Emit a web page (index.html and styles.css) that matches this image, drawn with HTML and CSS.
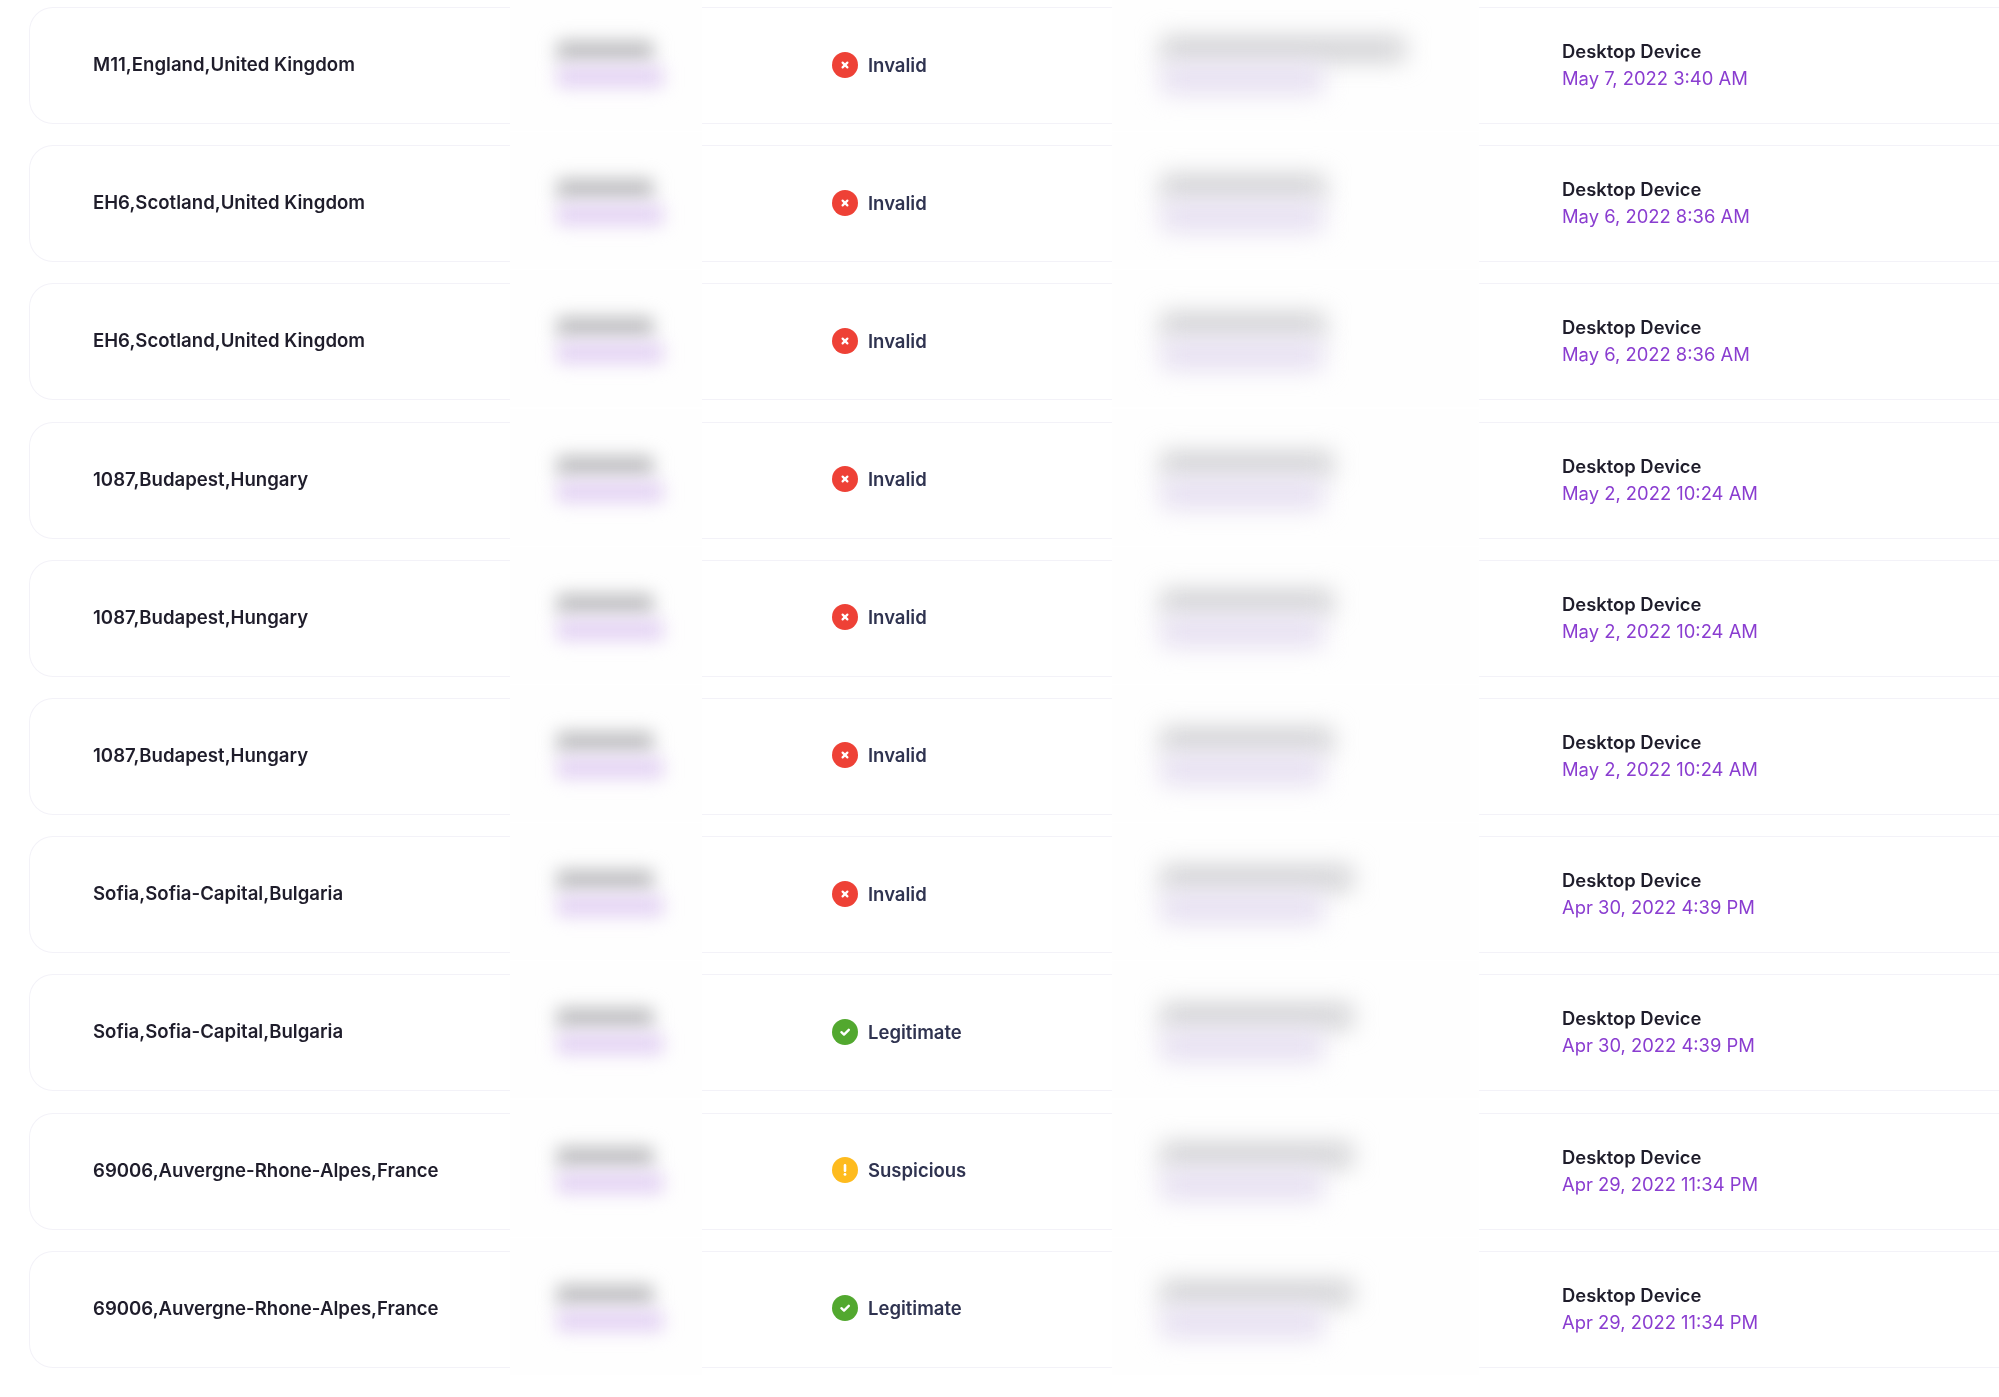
FILE: index.html
```html
<!DOCTYPE html>
<html lang="en">
<head>
<meta charset="utf-8">
<title>Login activity</title>
<link rel="stylesheet" href="styles.css">
</head>
<body>
<svg class="sprite" width="0" height="0" aria-hidden="true">
  <symbol id="i-x" viewBox="0 0 26 26"><path d="M10.6 10.6l4.8 4.8M15.4 10.6l-4.8 4.8" stroke="#fff" stroke-width="2.2" stroke-linecap="round" fill="none"/></symbol>
  <symbol id="i-c" viewBox="0 0 26 26"><path d="M9.4 13.2l2.6 2.4 4.8-4.8" stroke="#fff" stroke-width="2.4" stroke-linecap="round" stroke-linejoin="round" fill="none"/></symbol>
  <symbol id="i-e" viewBox="0 0 26 26"><path d="M13 8.4v5.4" stroke="#fff" stroke-width="2.6" stroke-linecap="round" fill="none"/><circle cx="13" cy="17.4" r="1.4" fill="#fff"/></symbol>
</svg>
<main class="list">
  <div class="row"><div class="loc">M11,England,United Kingdom</div><div class="cell"><div class="cover c-user"><i class="bar grey u1"></i><i class="bar violet u2"></i></div></div><div class="status"><span class="dot red"><svg class="ico"><use href="#i-x"/></svg></span><span class="label">Invalid</span></div><div class="cell"><div class="cover c-ip"><i class="bar grey ip-xl"></i><i class="bar violet ip-p"></i></div></div><div class="device"><b>Desktop Device</b><span>May 7, 2022 3:40 AM</span></div></div>
  <div class="row"><div class="loc">EH6,Scotland,United Kingdom</div><div class="cell"><div class="cover c-user"><i class="bar grey u1"></i><i class="bar violet u2"></i></div></div><div class="status"><span class="dot red"><svg class="ico"><use href="#i-x"/></svg></span><span class="label">Invalid</span></div><div class="cell"><div class="cover c-ip"><i class="bar grey ip-s"></i><i class="bar violet ip-p"></i></div></div><div class="device"><b>Desktop Device</b><span>May 6, 2022 8:36 AM</span></div></div>
  <div class="row"><div class="loc">EH6,Scotland,United Kingdom</div><div class="cell"><div class="cover c-user"><i class="bar grey u1"></i><i class="bar violet u2"></i></div></div><div class="status"><span class="dot red"><svg class="ico"><use href="#i-x"/></svg></span><span class="label">Invalid</span></div><div class="cell"><div class="cover c-ip"><i class="bar grey ip-s"></i><i class="bar violet ip-p"></i></div></div><div class="device"><b>Desktop Device</b><span>May 6, 2022 8:36 AM</span></div></div>
  <div class="row"><div class="loc">1087,Budapest,Hungary</div><div class="cell"><div class="cover c-user"><i class="bar grey u1"></i><i class="bar violet u2"></i></div></div><div class="status"><span class="dot red"><svg class="ico"><use href="#i-x"/></svg></span><span class="label">Invalid</span></div><div class="cell"><div class="cover c-ip"><i class="bar grey ip-m"></i><i class="bar violet ip-p"></i></div></div><div class="device"><b>Desktop Device</b><span>May 2, 2022 10:24 AM</span></div></div>
  <div class="row"><div class="loc">1087,Budapest,Hungary</div><div class="cell"><div class="cover c-user"><i class="bar grey u1"></i><i class="bar violet u2"></i></div></div><div class="status"><span class="dot red"><svg class="ico"><use href="#i-x"/></svg></span><span class="label">Invalid</span></div><div class="cell"><div class="cover c-ip"><i class="bar grey ip-m"></i><i class="bar violet ip-p"></i></div></div><div class="device"><b>Desktop Device</b><span>May 2, 2022 10:24 AM</span></div></div>
  <div class="row"><div class="loc">1087,Budapest,Hungary</div><div class="cell"><div class="cover c-user"><i class="bar grey u1"></i><i class="bar violet u2"></i></div></div><div class="status"><span class="dot red"><svg class="ico"><use href="#i-x"/></svg></span><span class="label">Invalid</span></div><div class="cell"><div class="cover c-ip"><i class="bar grey ip-m"></i><i class="bar violet ip-p"></i></div></div><div class="device"><b>Desktop Device</b><span>May 2, 2022 10:24 AM</span></div></div>
  <div class="row"><div class="loc">Sofia,Sofia-Capital,Bulgaria</div><div class="cell"><div class="cover c-user"><i class="bar grey u1"></i><i class="bar violet u2"></i></div></div><div class="status"><span class="dot red"><svg class="ico"><use href="#i-x"/></svg></span><span class="label">Invalid</span></div><div class="cell"><div class="cover c-ip"><i class="bar grey ip-l"></i><i class="bar violet ip-p"></i></div></div><div class="device"><b>Desktop Device</b><span>Apr 30, 2022 4:39 PM</span></div></div>
  <div class="row"><div class="loc">Sofia,Sofia-Capital,Bulgaria</div><div class="cell"><div class="cover c-user"><i class="bar grey u1"></i><i class="bar violet u2"></i></div></div><div class="status"><span class="dot green"><svg class="ico"><use href="#i-c"/></svg></span><span class="label">Legitimate</span></div><div class="cell"><div class="cover c-ip"><i class="bar grey ip-l"></i><i class="bar violet ip-p"></i></div></div><div class="device"><b>Desktop Device</b><span>Apr 30, 2022 4:39 PM</span></div></div>
  <div class="row"><div class="loc">69006,Auvergne-Rhone-Alpes,France</div><div class="cell"><div class="cover c-user"><i class="bar grey u1"></i><i class="bar violet u2"></i></div></div><div class="status"><span class="dot amber"><svg class="ico"><use href="#i-e"/></svg></span><span class="label">Suspicious</span></div><div class="cell"><div class="cover c-ip"><i class="bar grey ip-l"></i><i class="bar violet ip-p"></i></div></div><div class="device"><b>Desktop Device</b><span>Apr 29, 2022 11:34 PM</span></div></div>
  <div class="row"><div class="loc">69006,Auvergne-Rhone-Alpes,France</div><div class="cell"><div class="cover c-user"><i class="bar grey u1"></i><i class="bar violet u2"></i></div></div><div class="status"><span class="dot green"><svg class="ico"><use href="#i-c"/></svg></span><span class="label">Legitimate</span></div><div class="cell"><div class="cover c-ip"><i class="bar grey ip-l"></i><i class="bar violet ip-p"></i></div></div><div class="device"><b>Desktop Device</b><span>Apr 29, 2022 11:34 PM</span></div></div>
</main>
</body>
</html>
```
FILE: styles.css
```css
html, body {
  margin: 0;
  height: 100%;
  background: #fff;
  overflow: hidden;
}
body {
  font-family: Inter, "Liberation Sans", sans-serif;
  color: #1f1d2b;
}
.sprite { position: absolute; }
.list {
  display: flex;
  flex-direction: column;
  gap: 21.2px;
  padding: 7px 0 0 29px;
  box-sizing: border-box;
  width: 100%;
}
.row {
  display: grid;
  grid-template-columns: 462px 277px 328px 402px 1fr;
  box-sizing: border-box;
  height: 117px;
  padding-left: 63px;
  border: 1.5px solid #f3f2f8;
  border-right: 0;
  border-radius: 24px 0 0 24px;
  background: #fff;
}
.loc {
  display: flex;
  align-items: center;
  font-size: 18.6px;
  font-weight: 600;
  padding-bottom: 3px;
  filter: blur(0.35px);
}
.cell { position: relative; }
.cover {
  position: absolute;
  top: -14px;
  bottom: -8px;
  display: flex;
  flex-direction: column;
  background: #fefefe;
  padding-top: 47px;
  box-sizing: border-box;
}
.c-user { left: -45px; width: 191.5px; padding-left: 47px; }
.c-ip { left: -48px; width: 367px; padding-left: 49px; }
.bar { display: block; height: 20px; }
.grey { background: #bcbcbf; filter: blur(9px); }
.violet { background: #e2d0f3; margin-top: 6px; filter: blur(9px); }
.c-ip .grey { background: #cfcfd2; filter: blur(12px); height: 24px; margin-top: -4px; }
.c-ip .violet { background: #e6dff1; margin-top: 3px; height: 30px; filter: blur(12px); }
.u1 { width: 96px; }
.u2 { width: 106px; }
.ip-xl { width: 244px; }
.ip-l { width: 192px; }
.ip-m { width: 172px; }
.ip-s { width: 164px; }
.ip-p { width: 162px; }
.status {
  display: flex;
  align-items: center;
  gap: 10px;
  font-size: 18.5px;
  font-weight: 600;
  color: #2f3350;
  padding-bottom: 2px;
}
.label { filter: blur(0.35px); }
.dot {
  width: 26px;
  height: 26px;
  border-radius: 50%;
  flex: none;
}
.ico { display: block; width: 26px; height: 26px; }
.red { background: #ee4136; }
.green { background: #52a82f; }
.amber { background: #febb1e; }
.device {
  display: flex;
  flex-direction: column;
  justify-content: center;
  line-height: 27px;
  font-size: 18.4px;
  padding-bottom: 1px;
  filter: blur(0.35px);
}
.device b { font-weight: 600; }
.device span { color: #8a3dd0; font-weight: 400; }
```
